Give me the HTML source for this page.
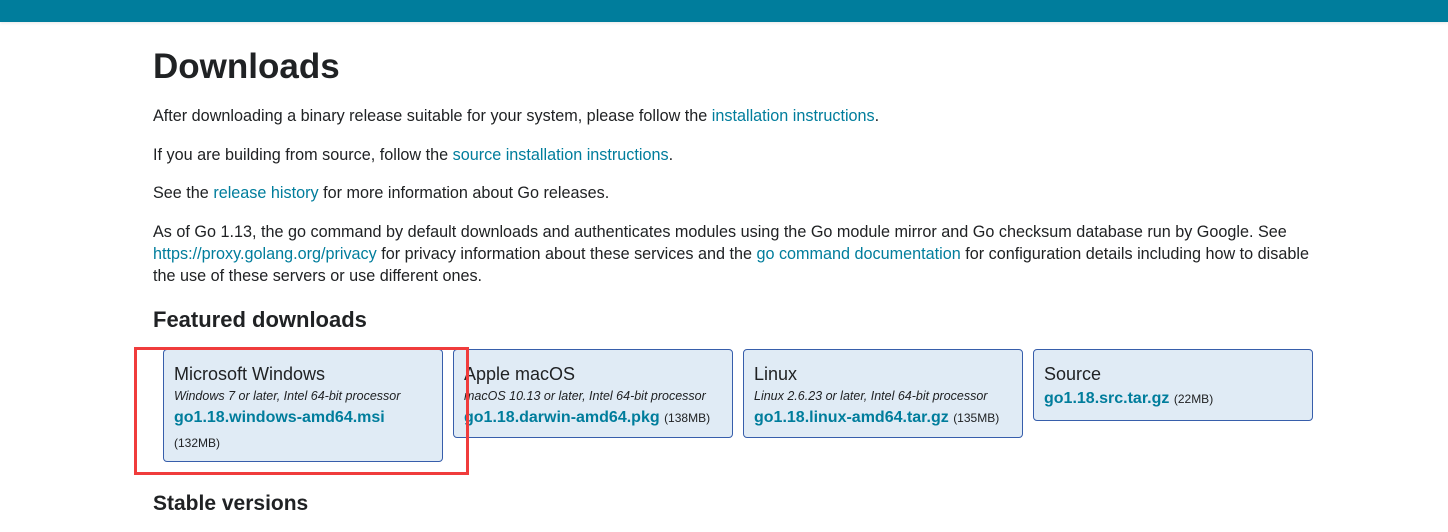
<!DOCTYPE html><html><head><style>
body{margin:0;width:1448px;height:532px;overflow:hidden;background:#fff;font-family:"Liberation Sans",sans-serif;color:#202224}
.bar{position:absolute;left:0;top:0;width:1448px;height:22px;background:#007d9c;box-shadow:0 1px 3px rgba(0,0,0,.1)}
.t{position:absolute;left:153px;font-size:16.2px;white-space:nowrap;line-height:22px}
a{color:#007d9c;text-decoration:none}
h1{position:absolute;left:153px;top:43px;margin:0;font-size:35px;font-weight:bold;line-height:48px}
h2{position:absolute;left:153px;margin:0;font-size:22px;font-weight:bold;line-height:30px}
.c{position:absolute;top:349px;width:280px;background:#e0ebf5;border:1px solid #375eab;border-radius:4px;box-sizing:border-box;padding:13px 10px 0}
.c .n{font-size:18px;line-height:22px;color:#202224}
.c .d{font-size:12.5px;font-style:italic;line-height:18px;margin-top:2px}
.c .f{font-size:16px;line-height:24px;margin-top:1px}
.c .f a{font-weight:bold}
.c small{font-size:12px;font-weight:normal;color:#202224}
.red{position:absolute;left:134px;top:347px;width:335px;height:128px;border:3px solid #f03c3c;box-sizing:border-box}
</style></head><body>
<div class="bar"></div>
<h1>Downloads</h1>
<div class="t" style="top:105px">After downloading a binary release suitable for your system, please follow the <a>installation instructions</a>.</div>
<div class="t" style="top:144px">If you are building from source, follow the <a>source installation instructions</a>.</div>
<div class="t" style="top:182px">See the <a>release history</a> for more information about Go releases.</div>
<div class="t" style="top:221px">As of Go 1.13, the go command by default downloads and authenticates modules using the Go module mirror and Go checksum database run by Google. See</div>
<div class="t" style="top:243px"><a>https://proxy.golang.org/privacy</a> for privacy information about these services and the <a>go command documentation</a> for configuration details including how to disable</div>
<div class="t" style="top:265px">the use of these servers or use different ones.</div>
<h2 style="top:305px">Featured downloads</h2>
<div class="c" style="left:163px;height:113px"><div class="n">Microsoft Windows</div><div class="d">Windows 7 or later, Intel 64-bit processor</div><div class="f"><a>go1.18.windows-amd64.msi</a></div><div class="f"><small>(132MB)</small></div></div>
<div class="c" style="left:453px;height:89px"><div class="n">Apple macOS</div><div class="d">macOS 10.13 or later, Intel 64-bit processor</div><div class="f"><a>go1.18.darwin-amd64.pkg</a> <small>(138MB)</small></div></div>
<div class="c" style="left:743px;height:89px"><div class="n">Linux</div><div class="d">Linux 2.6.23 or later, Intel 64-bit processor</div><div class="f"><a>go1.18.linux-amd64.tar.gz</a> <small>(135MB)</small></div></div>
<div class="c" style="left:1033px;height:72px"><div class="n">Source</div><div class="f" style="margin-top:2px"><a>go1.18.src.tar.gz</a> <small>(22MB)</small></div></div>
<div class="red"></div>
<h2 style="top:489px;font-size:21px">Stable versions</h2>
</body></html>
